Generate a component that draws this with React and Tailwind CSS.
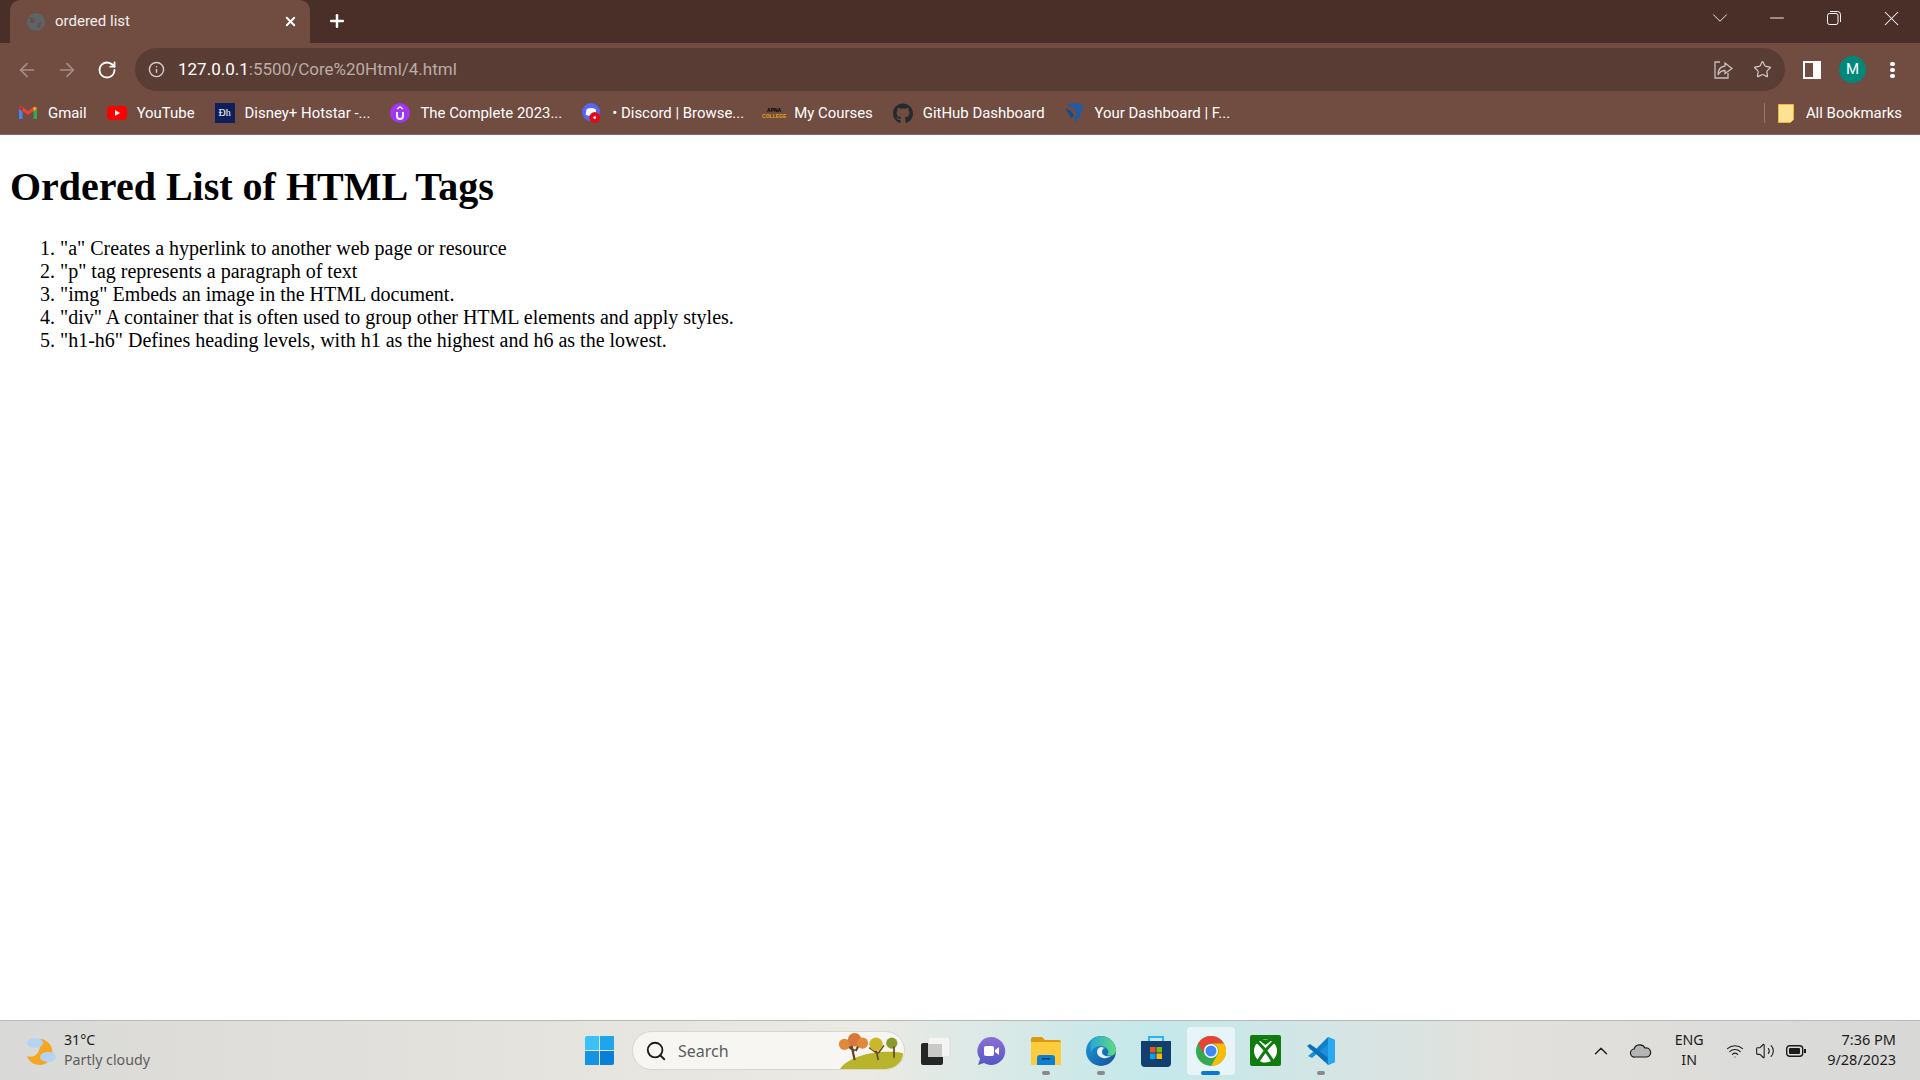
import React from 'react';
import { ArrowLeft, ArrowRight, RotateCw, Info, Star, Plus, X, ChevronDown, ChevronUp, Minus, Search, Wifi, Volume2 } from 'lucide-react';
import { FaGithub } from 'react-icons/fa';

const Gmail = () => (
  <svg width="20" height="20" viewBox="0 0 20 20">
    <path d="M1 5v11h3.500V8.500z" fill="#4285f4" />
    <path d="M19 5v11h-3.500V8.500z" fill="#34a853" />
    <path d="M1 5l9 7 9-7-2-2-7 5-7-5z" fill="#ea4335" />
    <path d="M1 5l3.500 3.500V4z" fill="#c5221f" />
    <path d="M19 5l-3.500 3.500V4z" fill="#fbbc04" />
  </svg>
);

const YouTube = () => (
  <svg width="20" height="20" viewBox="0 0 20 20">
    <rect y="3" width="20" height="14" rx="4" fill="#f00" />
    <path d="M8 7l5 3-5 3z" fill="#fff" />
  </svg>
);

const Hotstar = () => (
  <div className="w-[20px] h-[20px] bg-[#0f1f5c] text-white text-[10px] leading-[20px] text-center font-['Liberation_Serif',serif]">Ðh</div>
);

const Udemy = () => (
  <svg width="20" height="20" viewBox="0 0 20 20">
    <circle cx="10" cy="10" r="10" fill="#a435f0" />
    <path d="M7 9v4a3 3 0 0 0 6 0V9" fill="none" stroke="#fff" strokeWidth="2" />
    <path d="M7 6l3-2 3 2" fill="none" stroke="#fff" strokeWidth="1.500" />
  </svg>
);

const Discord = () => (
  <svg width="22" height="22" viewBox="0 0 22 22">
    <circle cx="10" cy="10" r="10" fill="#5865f2" />
    <path d="M5 7c3-2 7-2 10 0l1 6-3 1H7l-3-1z" fill="#fff" />
    <circle cx="14" cy="16" r="6" fill="#e00b1c" />
    <circle cx="14" cy="16" r="1.500" fill="#fff" />
  </svg>
);

const ApnaCollege = () => (
  <div className="w-[20px] flex flex-col items-center font-['Liberation_Sans',sans-serif] font-bold leading-[6px]">
    <span className="text-[5px] text-black">APNA</span>
    <span className="text-[5px] text-[#e8a317]">COLLEGE</span>
  </div>
);

const Frontend = () => (
  <svg width="20" height="22" viewBox="0 0 20 22">
    <path d="M1 3l8-2 10 2-4 5-6-2z" fill="#1f5ca8" />
    <path d="M0 6l6 3 3 5-3 2z" fill="#174a8c" />
    <path d="M9 8l9-1-7 14-2-5 3-4z" fill="#1f5ca8" />
  </svg>
);

const bookmarks = [
  { label: 'Gmail', icon: <Gmail /> },
  { label: 'YouTube', icon: <YouTube /> },
  { label: 'Disney+ Hotstar -...', icon: <Hotstar /> },
  { label: 'The Complete 2023...', icon: <Udemy /> },
  { label: '• Discord | Browse...', icon: <Discord /> },
  { label: 'My Courses', icon: <ApnaCollege /> },
  { label: 'GitHub Dashboard', icon: <FaGithub className="text-[#24292e] text-[21px]" /> },
  { label: 'Your Dashboard | F...', icon: <Frontend /> },
];

const TitleBar = () => (
  <div className="h-[43px] bg-[#4a2e28] flex items-start text-white">
    <div className="ml-[10px] w-[300px] h-[43px] bg-[#704c41] rounded-t-[10px] flex items-center pl-[16px] pr-[12px]">
      <svg width="20" height="20" viewBox="0 0 20 20" className="shrink-0">
        <circle cx="10" cy="10" r="9" fill="#5a6469" />
        <path d="M4 5l5 2-1 4-4 0zM12 11l4-1-2 6-3-1z" fill="#704c41" />
      </svg>
      <span className="ml-[9px] flex-1 text-[15px] text-[#f4eeec]">ordered list</span>
      <X size={15} strokeWidth={3} />
    </div>
    <Plus size={20} strokeWidth={3} className="ml-[17px] mt-[11px]" />
    <div className="flex-1" />
    <div className="w-[20px] h-[36px] flex items-center justify-center mr-[18px]">
      <ChevronDown size={26} strokeWidth={0.800} className="shrink-0" />
    </div>
    <div className="w-[57px] h-[36px] flex items-center justify-center">
      <Minus size={22} strokeWidth={1} />
    </div>
    <div className="w-[57px] h-[36px] flex items-center justify-center">
      <svg width="14" height="14" viewBox="0 0 14 14" fill="none" stroke="#fff">
        <rect x="0.500" y="2.500" width="10.500" height="11" rx="2" />
        <path d="M3 .5h7.500a3 3 0 0 1 3 3V11" />
      </svg>
    </div>
    <div className="w-[58px] h-[36px] flex items-center justify-center">
      <X size={25} strokeWidth={1} />
    </div>
  </div>
);

const Toolbar = () => (
  <div className="h-[53px] bg-[#704c41] flex items-center pl-[16px]">
    <ArrowLeft size={22} strokeWidth={1.800} className="text-[#a68f87]" />
    <ArrowRight size={22} strokeWidth={1.800} className="ml-[18px] text-[#a68f87]" />
    <RotateCw size={20} strokeWidth={2.200} className="ml-[19px] text-white" />
    <div className="ml-[18px] w-[1650px] h-[43px] bg-[#593d35] rounded-full flex items-center pl-[13px] pr-[13px]">
      <Info size={17} className="text-[#d5cbc8]" />
      <span className="ml-[13px] flex-1 text-[17px] text-white">
        127.0.0.1<span className="text-[#bcaca6]">:5500/Core%20Html/4.html</span>
      </span>
      <svg width="20" height="20" viewBox="0 0 20 20" fill="none" stroke="#c9bdb9" strokeWidth="1.300" className="mr-[19px]">
        <path d="M6 2H1v16h13v-5" />
        <path d="M11 3l7 5.500-7 5V10.500C8 10.500 5.500 12 4 15c0-5 2.500-8.500 7-9z" />
      </svg>
      <Star size={19} strokeWidth={1.500} className="text-[#d5cbc8]" />
    </div>
    <svg width="18" height="18" viewBox="0 0 18 18" className="ml-[18px]">
      <rect width="18" height="18" fill="#fff" />
      <rect x="2" y="2" width="8" height="14" fill="#704c41" />
    </svg>
    <div className="ml-[18px] w-[27px] h-[27px] rounded-full bg-[#00897b] text-white text-[15px] flex items-center justify-center">M</div>
    <div className="ml-[24px] flex flex-col gap-[2px]">
      <span className="w-[5px] h-[4px] rounded-full bg-white" />
      <span className="w-[5px] h-[4px] rounded-full bg-white" />
      <span className="w-[5px] h-[4px] rounded-full bg-white" />
    </div>
  </div>
);

const BookmarksBar = () => (
  <div className="h-[39px] bg-[#704c41] flex items-center pl-[18px] pr-[18px] text-[14.930px] text-white pb-[4px] border-b border-[#8a6a60]">
    <div className="flex items-center gap-[20px]">
      {bookmarks.map((b) => (
        <div key={b.label} className="flex items-center gap-[10px] whitespace-nowrap">
          <div className="w-[20px] flex justify-center items-center">{b.icon}</div>
          <span>{b.label}</span>
        </div>
      ))}
    </div>
    <div className="flex-1" />
    <div className="w-px h-[20px] bg-[#94776e]" />
    <svg width="16" height="19" viewBox="0 0 16 19" className="ml-[13px]">
      <path d="M.5.5h15v15l-3 3H.5z" fill="#fde293" stroke="#e8b93c" />
    </svg>
    <span className="ml-[12px]">All Bookmarks</span>
  </div>
);

const Store = () => (
  <svg width="30" height="32" viewBox="0 0 30 32">
    <path d="M8 6V2h14v4" fill="none" stroke="#29b6f6" strokeWidth="2" />
    <path d="M0 6h30v22a4 4 0 0 1-4 4H4a4 4 0 0 1-4-4z" fill="#123f70" />
    <rect x="9" y="12" width="5.500" height="5.500" fill="#f25022" />
    <rect x="15.500" y="12" width="5.500" height="5.500" fill="#7fba00" />
    <rect x="9" y="18.500" width="5.500" height="5.500" fill="#00a4ef" />
    <rect x="15.500" y="18.500" width="5.500" height="5.500" fill="#ffb900" />
  </svg>
);

const Chrome = () => (
  <svg width="30" height="30" viewBox="0 0 30 30">
    <circle cx="15" cy="15" r="15" fill="#34a853" />
    <path d="M15 0a15 15 0 0 1 13 7.500H15a7.500 7.500 0 0 0-6.500 11.250L2 7.500A15 15 0 0 1 15 0z" fill="#ea4335" />
    <path d="M28 7.500A15 15 0 0 1 15 30l6.500-11.250A7.500 7.500 0 0 0 15 7.500z" fill="#fbbc04" />
    <circle cx="15" cy="15" r="7" fill="#fff" />
    <circle cx="15" cy="15" r="5.500" fill="#4285f4" />
  </svg>
);

const Xbox = () => (
  <svg width="31" height="31" viewBox="0 0 31 31">
    <rect width="31" height="31" rx="2" fill="#107c10" />
    <circle cx="15.500" cy="16" r="11.500" fill="#fff" />
    <path d="M6 6C12 10 19 20 24 28M25 6C19 10 12 20 7 28" fill="none" stroke="#107c10" strokeWidth="3" />
    <path d="M9 5h13l-6.500 5z" fill="#107c10" />
  </svg>
);

const VSCode = () => (
  <svg width="30" height="30" viewBox="0 0 30 30">
    <path d="M22 1l7 3v22l-7 3L8 15z" fill="#0f7fcc" />
    <path d="M22 1l7 3v22l-7 3z" fill="#29a9f0" />
    <path d="M22 8v14L7 10 3 13l5 2-6 5 4 2z" fill="#1b8fdb" />
    <path d="M1 10l3-2 18 14-3 4z" fill="#0a6fb8" />
  </svg>
);

const Edge = () => (
  <svg width="30" height="30" viewBox="0 0 30 30">
    <defs>
      <linearGradient id="edge" x1="0" y1="0" x2="1" y2="1">
        <stop offset="0" stopColor="#1a9fd8" />
        <stop offset="1" stopColor="#164f9c" />
      </linearGradient>
      <linearGradient id="edgeTop" x1="0" y1="0" x2="1" y2="0">
        <stop offset="0" stopColor="#2aa5d8" />
        <stop offset="1" stopColor="#5fdc7c" />
      </linearGradient>
    </defs>
    <circle cx="15" cy="15" r="15" fill="url(#edge)" />
    <path d="M7 3c8-6 21-2 23 11 0 5-5 7-9 5 3-3 1-8-6-9-6 0-9 3-10 7C4 12 4 7 7 3z" fill="url(#edgeTop)" />
    <path d="M15 11c-4 1-5 5-3 8 3 4 9 4 13 1-5 1-9-1-9-4 0-2 1-4 3-4z" fill="#e3f3f3" />
  </svg>
);

const Files = () => (
  <svg width="30" height="28" viewBox="0 0 30 28">
    <path d="M0 2a2 2 0 0 1 2-2h9l3 3h14a2 2 0 0 1 2 2v3H0z" fill="#d99b0d" />
    <rect y="5" width="30" height="23" rx="1" fill="#fdcb3e" />
    <path d="M6 21a3 3 0 0 1 3-3h12a3 3 0 0 1 3 3v7H6z" fill="#0c7fd0" />
    <rect x="11" y="21" width="8" height="1.500" fill="#063f6b" />
  </svg>
);

const Chat = () => (
  <svg width="30" height="30" viewBox="0 0 30 30">
    <defs>
      <linearGradient id="chat" x1="0" y1="0" x2="0" y2="1">
        <stop offset="0" stopColor="#8b6fd4" />
        <stop offset="1" stopColor="#5558c4" />
      </linearGradient>
    </defs>
    <path d="M15 1a14 14 0 1 1-7 26l-6 2 2-6A14 14 0 0 1 15 1z" fill="url(#chat)" />
    <rect x="8" y="10" width="10" height="10" rx="2" fill="#fff" />
    <path d="M19 14l4-3v8l-4-3z" fill="#fff" />
  </svg>
);

const TaskView = () => (
  <svg width="30" height="28" viewBox="0 0 30 28">
    <rect x="7" y="0" width="22" height="20" rx="2" fill="#f4f4f2" stroke="#dcdcda" />
    <path d="M7 7h14v13h-14z" fill="#c9c9c7" />
    <path d="M0 8a2 2 0 0 1 2-2h5v14h15v6a2 2 0 0 1-2 2H2a2 2 0 0 1-2-2z" fill="#262626" />
  </svg>
);

const Weather = () => (
  <svg width="32" height="30" viewBox="0 0 32 30">
    <path d="M14 3a13 13 0 1 1-13 17c6 3 15-2 13-17z" fill="#f5a623" />
    <ellipse cx="9" cy="7" rx="8" ry="5" fill="#b5d4f4" />
    <ellipse cx="22" cy="21" rx="8" ry="5" fill="#b5d4f4" />
  </svg>
);

const Trees = () => (
  <svg width="72" height="36" viewBox="0 0 64 32">
    <path d="M8 32c8-12 36-18 56-14 0 6-4 14-14 14z" fill="#b8b52a" />
    <path d="M18 10l3 14M13 10l8 6M26 8l-4 8" stroke="#6b4423" strokeWidth="2" fill="none" />
    <path d="M40 14l2 10M34 13l7 5M47 11l-5 7" stroke="#6b4423" strokeWidth="1.500" fill="none" />
    <circle cx="12" cy="10" r="5" fill="#e0893a" />
    <circle cx="21" cy="6" r="6" fill="#d9773a" />
    <circle cx="28" cy="9" r="5" fill="#e0893a" />
    <circle cx="40" cy="10" r="6" fill="#c9b92a" />
    <circle cx="54" cy="9" r="5" fill="#8a9a2c" />
    <path d="M56 12v10" stroke="#6b4423" strokeWidth="1.500" />
  </svg>
);

const apps = [
  { id: 'chat', icon: <Chat /> },
  { id: 'files', icon: <Files />, dot: true },
  { id: 'edge', icon: <Edge />, dot: true },
  { id: 'store', icon: <Store /> },
  { id: 'chrome', icon: <Chrome />, active: true },
  { id: 'xbox', icon: <Xbox /> },
  { id: 'vscode', icon: <VSCode />, dot: true },
];

const Taskbar = () => (
  <div className="h-[60px] flex items-center border-t border-[#b8b8b6] bg-[linear-gradient(90deg,#d9d9d7_0%,#e4e2dd_25%,#eceae4_45%,#c4e8ea_60%,#d2e6e6_68%,#e2e1dd_78%,#d8d8d7_100%)] font-['Noto_Sans',sans-serif]">
    <div className="w-[583px] pl-[26px] flex items-center">
      <Weather />
      <div className="ml-[6px] mb-[2px] text-[14.200px] leading-[20px]">
        <div className="text-[#1c1c1c]">31°C</div>
        <div className="text-[#5c5c5c]">Partly cloudy</div>
      </div>
    </div>
    <div className="w-[32px] flex justify-center">
      <div className="w-[29px] h-[29px] grid grid-cols-2 gap-[1px]">
        <span className="bg-[#3cc0f5] rounded-tl-[2px]" />
        <span className="bg-[#1fa5ec]" />
        <span className="bg-[#1594e3]" />
        <span className="bg-[#0a7fd8] rounded-br-[2px]" />
      </div>
    </div>
    <div className="ml-[17px] w-[273px] h-[39px] rounded-full bg-[#f7f6f2] border border-[#d6d5d0] flex items-center pl-[12px] pr-[1px] overflow-hidden">
      <Search size={22} strokeWidth={2} className="text-[#1c1c1c]" />
      <span className="ml-[11px] flex-1 text-[16px] text-[#5c5c5c]">Search</span>
      <Trees />
    </div>
    <div className="ml-[3px] w-[55px] flex justify-center"><TaskView /></div>
    {apps.map((a) => (
      <div key={a.id} className={`relative w-[48px] mx-[3.500px] h-[48px] flex items-center justify-center rounded-[4px] ${a.active ? 'bg-[#e8f5f8]' : ''}`}>
        {a.icon}
        {a.dot && <span className="absolute bottom-[0px] left-[20px] w-[8px] h-[4px] rounded-full bg-[#8a8a8a]" />}
        {a.active && <span className="absolute bottom-[0px] left-[14.500px] w-[19px] h-[4px] rounded-full bg-[#0a78d0]" />}
      </div>
    ))}
    <div className="flex-1" />
    <ChevronUp size={22} strokeWidth={1.500} className="text-[#1c1c1c] mr-[-2px]" />
    <svg width="22" height="14" viewBox="0 0 22 14" className="ml-[20px]">
      <path d="M5 13a4 4 0 0 1-1-8 6 6 0 0 1 11-1 4.500 4.500 0 0 1 2 9z" fill="#b5b5b5" stroke="#1c1c1c" strokeWidth="1.200" />
    </svg>
    <div className="ml-[19px] mb-[2px] w-[36px] text-center text-[14.200px] leading-[20px] text-[#1c1c1c]">
      <div>ENG</div>
      <div>IN</div>
    </div>
    <Wifi size={18} strokeWidth={1.500} className="ml-[19px] text-[#1c1c1c]" />
    <Volume2 size={20} strokeWidth={1.300} className="ml-[11px] text-[#1c1c1c]" />
    <svg width="20" height="12" viewBox="0 0 20 12" className="ml-[11px]">
      <rect x="0.700" y="0.700" width="16" height="10.600" rx="3" fill="none" stroke="#1c1c1c" strokeWidth="1.400" />
      <rect x="3" y="3" width="11" height="6" rx="1" fill="#1c1c1c" />
      <rect x="18" y="4" width="2" height="4" fill="#1c1c1c" />
    </svg>
    <div className="ml-[21px] mr-[24px] mb-[3px] text-right text-[14.500px] leading-[20px] text-[#1c1c1c]">
      <div>7:36 PM</div>
      <div>9/28/2023</div>
    </div>
  </div>
);

export default function App() {
  const items = [
    '"a" Creates a hyperlink to another web page or resource',
    '"p" tag represents a paragraph of text',
    '"img" Embeds an image in the HTML document.',
    '"div" A container that is often used to group other HTML elements and apply styles.',
    '"h1-h6" Defines heading levels, with h1 as the highest and h6 as the lowest.',
  ];

  return (
    <div className="w-[1920px] h-[1080px] flex flex-col overflow-hidden bg-white font-['Roboto',sans-serif]">
      <TitleBar />
      <Toolbar />
      <BookmarksBar />
      <main className="flex-1 px-[10px] font-['Liberation_Serif',serif] text-black">
        <h1 className="mt-[29px] mb-[27px] text-[40px] leading-[46px] font-bold">Ordered List of HTML Tags</h1>
        <ol className="list-decimal pl-[50px] text-[20px] leading-[23px]">
          {items.map((t) => (
            <li key={t}>{t}</li>
          ))}
        </ol>
      </main>
      <Taskbar />
    </div>
  );
}
